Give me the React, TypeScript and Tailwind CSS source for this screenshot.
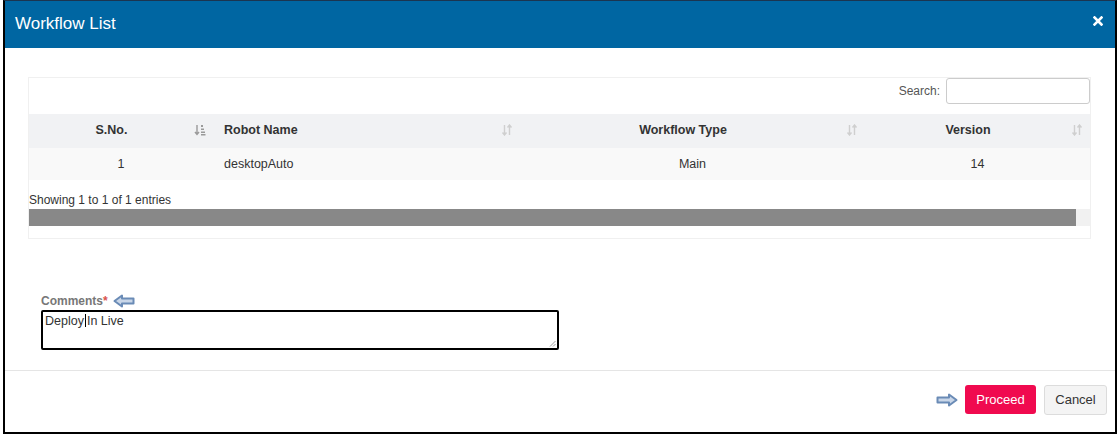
import React from 'react'

function SortIcon({ active = false }: { active?: boolean }) {
  if (active) {
    return (
      <svg width="12" height="12" viewBox="0 0 12 12" className="text-[#9a9a9a]">
        <path d="M3 1v9M1 8l2 2.5L5 8" stroke="currentColor" strokeWidth="1.4" fill="none" />
        <rect x="7" y="1" width="2" height="2" fill="currentColor" />
        <rect x="7" y="4.5" width="3" height="1.5" fill="currentColor" />
        <rect x="7" y="7.5" width="4" height="1.5" fill="currentColor" />
        <rect x="7" y="10" width="4.5" height="1.5" fill="currentColor" />
      </svg>
    )
  }
  return (
    <svg width="12" height="12" viewBox="0 0 12 12" className="text-[#cfcfcf]">
      <path d="M3.5 1v9.5M1.5 8.5l2 2.5 2-2.5" stroke="currentColor" strokeWidth="1.4" fill="none" />
      <path d="M8.5 11V1.5M6.5 3.5l2-2.5 2 2.5" stroke="currentColor" strokeWidth="1.4" fill="none" />
    </svg>
  )
}

function BlockArrow({ dir }: { dir: 'left' | 'right' }) {
  const pts = dir === 'left' ? '1.5,7 9,1.5 9,4.5 20.5,4.5 20.5,9.5 9,9.5 9,12.5' : '20.5,7 13,1.5 13,4.5 1.5,4.5 1.5,9.5 13,9.5 13,12.5'
  return (
    <svg width="22" height="14" viewBox="0 0 22 14">
      <polygon points={pts} fill="#c9d6e8" stroke="#6a8bb6" strokeWidth="2" strokeLinejoin="round" />
    </svg>
  )
}

export default function App() {
  const font = { fontFamily: '"Liberation Sans", Arial, sans-serif' }
  return (
    <div className="h-[436px] w-[1120px] bg-white pl-[3px] pr-[3px]" style={font}>
      <div className="flex h-[434px] flex-col border-x-2 border-b-2 border-t border-black border-t-[#1b3550]">
        {/* header */}
        <div className="flex h-[47px] items-center justify-between bg-[#0066a2] pl-[10px] pr-[12px]">
          <h1 className="-mt-[2px] text-[17px] text-white">Workflow List</h1>
          <svg width="10" height="10" viewBox="0 0 10 10" className="-mt-[8px]">
            <path d="M1.5 1.5l7 7M8.5 1.5l-7 7" stroke="white" strokeWidth="2.6" strokeLinecap="square" />
          </svg>
        </div>

        {/* body */}
        <div className="h-[322px] pl-[23px] pr-[24px] pt-[29px]">
          <div className="border border-[#f0f0f0] pb-[12px]">
            <div className="flex items-center justify-end gap-[6px]">
              <span className="text-[12px] text-[#555]">Search:</span>
              <input className="h-[26px] w-[144px] rounded-[3px] border border-[#ccc] bg-white outline-none" />
            </div>
            <table className="mt-[10px] w-full border-collapse text-[12.5px] text-[#333]">
              <thead>
                <tr className="h-[34px] bg-[#f1f2f4] font-bold">
                  <th className="w-[184px] pr-[7px]">
                    <div className="-mt-[2px] flex items-center">
                      <span className="flex-1 text-center">S.No.</span>
                      <SortIcon active />
                    </div>
                  </th>
                  <th className="w-[307px] pl-[11px] pr-[7px]">
                    <div className="-mt-[2px] flex items-center justify-between">
                      <span>Robot Name</span>
                      <SortIcon />
                    </div>
                  </th>
                  <th className="w-[345px] pr-[7px]">
                    <div className="-mt-[2px] flex items-center">
                      <span className="flex-1 text-center">Workflow Type</span>
                      <SortIcon />
                    </div>
                  </th>
                  <th className="pr-[7px]">
                    <div className="-mt-[2px] flex items-center">
                      <span className="flex-1 text-center">Version</span>
                      <SortIcon />
                    </div>
                  </th>
                </tr>
              </thead>
              <tbody>
                <tr className="h-[32px] bg-[#f9f9f9]">
                  <td className="text-center">1</td>
                  <td className="pl-[11px]">desktopAuto</td>
                  <td className="text-center">Main</td>
                  <td className="text-center">14</td>
                </tr>
              </tbody>
            </table>
            <p className="mt-[11px] text-[12px] text-[#333]">Showing 1 to 1 of 1 entries</p>
            <div className="flex h-[17px] bg-[#f1f1f1]">
              <div className="h-full flex-1 bg-[#888888]" />
              <div className="w-[14px]" />
            </div>
          </div>

          <div className="ml-[13px] mt-[53px] w-[518px]">
            <div className="flex items-center gap-[5px]">
              <label className="text-[12px] font-bold text-[#777]">
                Comments<span className="text-[#d9534f]">*</span>
              </label>
              <BlockArrow dir="left" />
            </div>
            <div className="relative h-[40px] rounded-[2px] border-2 border-black px-[2px] text-[12.5px] text-[#333]">
              <span>Deploy</span>
              <span className="mx-px inline-block h-[13px] w-px translate-y-[2px] bg-black" />
              <span>In Live</span>
              <svg width="7" height="7" viewBox="0 0 7 7" className="absolute bottom-px right-px">
                <path d="M6.5 1L1 6.5M6.5 4L4 6.5" stroke="#888" strokeWidth="0.8" />
              </svg>
            </div>
          </div>
        </div>

        {/* footer */}
        <div className="flex flex-1 items-start justify-end gap-[8px] border-t border-[#e5e5e5] pr-[8px] pt-[14px]">
          <div className="mr-[-1px] mt-[8px]">
            <BlockArrow dir="right" />
          </div>
          <button className="h-[29px] w-[71px] rounded-[3px] bg-[#f00a4f] text-[13px] text-white">Proceed</button>
          <button className="h-[30px] w-[63px] rounded-[3px] border border-[#dcdcdc] bg-[#f4f4f4] text-[13px] text-[#333]">
            Cancel
          </button>
        </div>
      </div>
    </div>
  )
}
